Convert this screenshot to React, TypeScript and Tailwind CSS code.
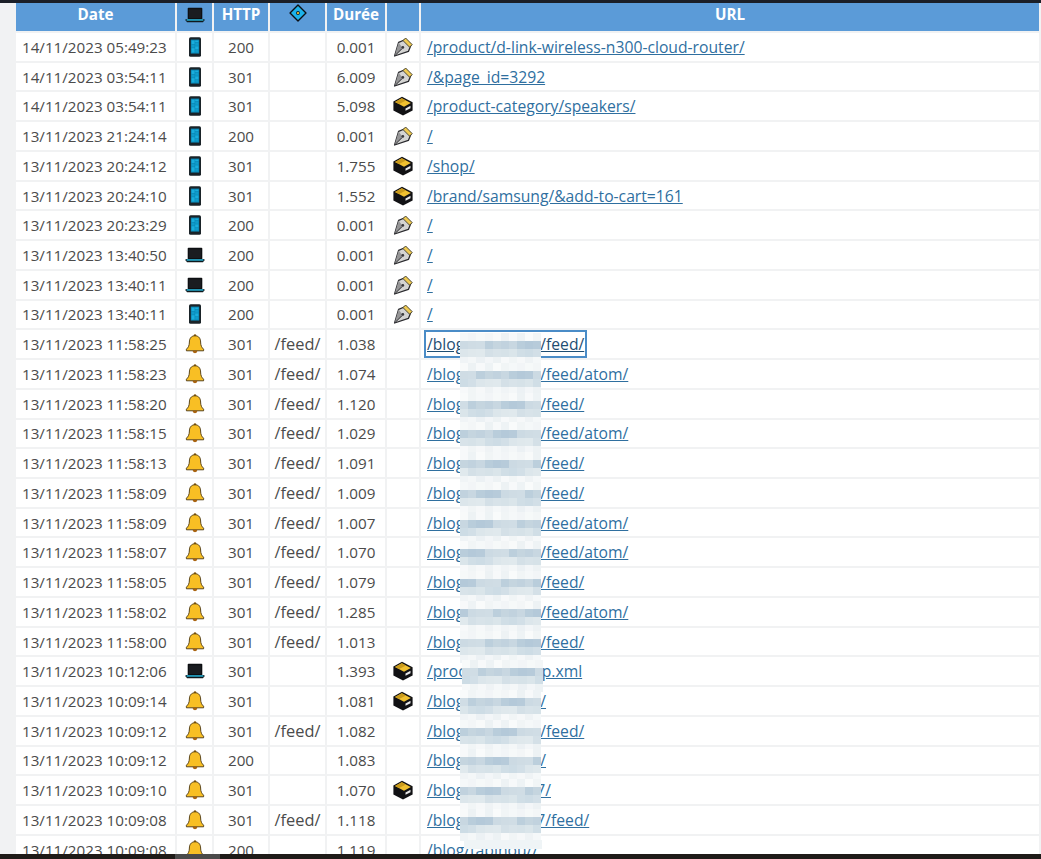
const Laptop = () => (
  <svg viewBox="0 0 20 20" className="mx-auto block h-5 w-5">
    <path d="M3.5 2.8h13a.8.8 0 0 1 .8.8V14H2.7V3.6a.8.8 0 0 1 .8-.8z" fill="#0d0f12" />
    <rect x="4" y="4.2" width="12" height="8.8" fill="#1a1c20" />
    <path d="M.6 14h18.8v1.2L18 17.2H2L.6 15.2z" fill="#10181c" />
    <rect x="1.6" y="14.2" width="16.8" height="1.5" fill="#27b2d8" />
  </svg>
);

const Phone = () => (
  <svg viewBox="0 0 20 20" className="mx-auto block h-5 w-5">
    <rect x="4" y="0.2" width="12" height="19.6" rx="1.6" fill="#1a2328" />
    <rect x="5.8" y="2.6" width="8.4" height="14" fill="#0a86b4" />
    <rect x="6.6" y="3.6" width="3" height="3.4" fill="#19aedd" />
    <rect x="10.2" y="3.6" width="3.2" height="1.6" fill="#19aedd" />
    <rect x="10.2" y="5.8" width="3.2" height="3" fill="#0f9ccb" />
    <rect x="6.6" y="7.6" width="3" height="3" fill="#0f9ccb" />
    <rect x="10.2" y="9.4" width="3.2" height="3" fill="#19aedd" />
    <rect x="6.6" y="11.2" width="3" height="4.4" fill="#19aedd" />
    <rect x="10.2" y="13" width="3.2" height="2.6" fill="#0f9ccb" />
  </svg>
);

const Nib = () => (
  <svg viewBox="0 0 20 20" className="mx-auto block h-5 w-5">
    <path d="M12.5 2.5 18 8l-2.6 6.4L1.6 19 5.6 5.4z" fill="#d4d4d2" stroke="#2a2a2e" strokeWidth="1.3" strokeLinejoin="round" />
    <path d="M5.6 5.4 1.6 19l8.4-7.6z" fill="#959596" />
    <path d="M12.6 1 19.2 7.6 16.6 10.2 10 3.6z" fill="#f0cb52" stroke="#3a3a30" strokeWidth="0.9" strokeLinejoin="round" />
    <path d="M1.6 19l7-7" stroke="#2a2a2e" strokeWidth="0.9" />
    <circle cx="9.8" cy="10.4" r="1.4" fill="#3a3a3d" />
  </svg>
);

const Box = () => (
  <svg viewBox="0 0 20 20" className="mx-auto block h-5 w-5">
    <path d="M9 .8 19.6 6.2v8.4L10 19.6.4 14.6V5.6z" fill="#111114" strokeLinejoin="round" />
    <path d="M8.8 2.2 17.8 7 11 10.8 2 6z" fill="#f0c030" />
    <path d="M8.8 2.2 13 4.5 6 8.1 2 6z" fill="#c99a1c" />
    <path d="m12.5 12.4 5-2.6v2.4l-5 2.6z" fill="#e8e8e8" />
  </svg>
);

const Bell = () => (
  <svg viewBox="0 0 20 20" className="mx-auto block h-5 w-5">
    <circle cx="10" cy="1.6" r="1.3" fill="#8a5c10" />
    <path d="M10 1.8C5.8 1.8 4.4 5 4.4 8c0 3.6-1.2 5.6-3 7.2v1.6h17.2v-1.6c-1.8-1.6-3-3.6-3-7.2 0-3-1.4-6.2-5.6-6.2z" fill="#f8bf24" stroke="#4a3510" strokeWidth="0.9" strokeLinejoin="round" />
    <path d="M7.6 16.8a2.4 2.4 0 0 0 4.8 0z" fill="#a8620e" />
  </svg>
);

const Diamond = () => (
  <svg viewBox="0 0 16 16" className="h-[18px] w-[18px]">
    <path d="M8 .9 15.1 8 8 15.1.9 8z" fill="#1cb2ea" stroke="#0b0f14" strokeWidth="1.2" strokeLinejoin="round" />
    <circle cx="8" cy="8" r="1.7" fill="#10202a" />
    <circle cx="8" cy="8" r="1" fill="#f2c230" />
  </svg>
);

const shades = [
  ['#f5f8f9', '#eef3f5', '#f8fafa', '#f2f5f7', '#f9fbfb', '#edf2f4', '#f6f9f9', '#f1f5f6', '#f7f9fa', '#f3f6f7'],
  ['#ccdae3', '#b9cddb', '#c5d5df', '#cfdce4', '#b4c9d9', '#c1d2de', '#d0dde5', '#b7cbda', '#c8d7e1', '#bccfdc'],
  ['#dce6eb', '#d0dee6', '#d8e3e9', '#dfe8ec', '#cddce5', '#d6e2e8', '#e0e9ed', '#d2dfe7', '#dae5ea', '#d4e0e7'],
  ['#f0f4f6', '#f6f8f9', '#edf2f4', '#f4f7f8', '#eff3f5', '#f7f9fa', '#ecf1f4', '#f5f8f9', '#f1f5f6', '#f3f6f8'],
];

// mosaic hiding part of the url
const Mask = ({ seed, narrow }: { seed: number; narrow?: boolean }) => (
  <span className={narrow ? 'relative inline-block h-px w-[72px]' : 'relative inline-block h-px w-[76px]'}>
    <span className="absolute -top-[16px] -left-[4px] z-10 grid h-[32px] w-[81px] grid-cols-10 grid-rows-4 blur-[0.4px]">
      {shades.flatMap((row, r) =>
        row.map((_, c) => (
          <span key={`${r}-${c}`} style={{ backgroundColor: row[(c * 3 + seed * (r + 2)) % 10] }} />
        )),
      )}
    </span>
  </span>
);

type Row = {
  date: string;
  agent: 'phone' | 'laptop' | 'bell';
  http: number;
  feed?: boolean;
  time: string;
  kind?: 'nib' | 'box';
  url?: string;
  pre?: string;
  post?: string;
  narrow?: boolean;
  focus?: boolean;
  faint?: boolean;
};

const rows: Row[] = [
  { date: '14/11/2023 05:49:23', agent: 'phone', http: 200, time: '0.001', kind: 'nib', url: '/product/d-link-wireless-n300-cloud-router/' },
  { date: '14/11/2023 03:54:11', agent: 'phone', http: 301, time: '6.009', kind: 'nib', url: '/&page_id=3292' },
  { date: '14/11/2023 03:54:11', agent: 'phone', http: 301, time: '5.098', kind: 'box', url: '/product-category/speakers/' },
  { date: '13/11/2023 21:24:14', agent: 'phone', http: 200, time: '0.001', kind: 'nib', url: '/' },
  { date: '13/11/2023 20:24:12', agent: 'phone', http: 301, time: '1.755', kind: 'box', url: '/shop/' },
  { date: '13/11/2023 20:24:10', agent: 'phone', http: 301, time: '1.552', kind: 'box', url: '/brand/samsung/&add-to-cart=161' },
  { date: '13/11/2023 20:23:29', agent: 'phone', http: 200, time: '0.001', kind: 'nib', url: '/' },
  { date: '13/11/2023 13:40:50', agent: 'laptop', http: 200, time: '0.001', kind: 'nib', url: '/' },
  { date: '13/11/2023 13:40:11', agent: 'laptop', http: 200, time: '0.001', kind: 'nib', url: '/' },
  { date: '13/11/2023 13:40:11', agent: 'phone', http: 200, time: '0.001', kind: 'nib', url: '/' },
  { date: '13/11/2023 11:58:25', agent: 'bell', http: 301, feed: true, time: '1.038', pre: '/blog', post: '/feed/', focus: true },
  { date: '13/11/2023 11:58:23', agent: 'bell', http: 301, feed: true, time: '1.074', pre: '/blog', post: '/feed/atom/' },
  { date: '13/11/2023 11:58:20', agent: 'bell', http: 301, feed: true, time: '1.120', pre: '/blog', post: '/feed/' },
  { date: '13/11/2023 11:58:15', agent: 'bell', http: 301, feed: true, time: '1.029', pre: '/blog', post: '/feed/atom/' },
  { date: '13/11/2023 11:58:13', agent: 'bell', http: 301, feed: true, time: '1.091', pre: '/blog', post: '/feed/' },
  { date: '13/11/2023 11:58:09', agent: 'bell', http: 301, feed: true, time: '1.009', pre: '/blog', post: '/feed/' },
  { date: '13/11/2023 11:58:09', agent: 'bell', http: 301, feed: true, time: '1.007', pre: '/blog', post: '/feed/atom/' },
  { date: '13/11/2023 11:58:07', agent: 'bell', http: 301, feed: true, time: '1.070', pre: '/blog', post: '/feed/atom/' },
  { date: '13/11/2023 11:58:05', agent: 'bell', http: 301, feed: true, time: '1.079', pre: '/blog', post: '/feed/' },
  { date: '13/11/2023 11:58:02', agent: 'bell', http: 301, feed: true, time: '1.285', pre: '/blog', post: '/feed/atom/' },
  { date: '13/11/2023 11:58:00', agent: 'bell', http: 301, feed: true, time: '1.013', pre: '/blog', post: '/feed/' },
  { date: '13/11/2023 10:12:06', agent: 'laptop', http: 301, time: '1.393', kind: 'box', pre: '/proc', post: 'p.xml' },
  { date: '13/11/2023 10:09:14', agent: 'bell', http: 301, time: '1.081', kind: 'box', pre: '/blog', post: '/' },
  { date: '13/11/2023 10:09:12', agent: 'bell', http: 301, feed: true, time: '1.082', pre: '/blog', post: '/feed/' },
  { date: '13/11/2023 10:09:12', agent: 'bell', http: 200, time: '1.083', pre: '/blog', post: '/' },
  { date: '13/11/2023 10:09:10', agent: 'bell', http: 301, time: '1.070', kind: 'box', pre: '/blog', post: '7/', narrow: true },
  { date: '13/11/2023 10:09:08', agent: 'bell', http: 301, feed: true, time: '1.118', pre: '/blog', post: '7/feed/', narrow: true },
  { date: '13/11/2023 10:09:08', agent: 'bell', http: 200, time: '1.119', pre: '/blog', post: '/tapinou//', faint: true },
];

const agents = { phone: <Phone />, laptop: <Laptop />, bell: <Bell /> };
const kinds = { nib: <Nib />, box: <Box /> };

export default function App() {
  return (
    <div className="flex h-[859px] w-[1041px] flex-col overflow-hidden bg-[#f1f2f3] font-['Open_Sans','Noto_Sans',sans-serif] text-[15.2px] leading-[20px] text-[#4b4b4b]">
      <div className="z-20 h-[3px] shrink-0 bg-[#1b1f27]" />
      <div className="min-h-0 flex-1 overflow-hidden pl-[14px]">
        <table className="-mt-[2px] w-[1027px] table-fixed border-separate border-spacing-[2px]">
          <colgroup>
            <col className="w-[159px]" />
            <col className="w-[35px]" />
            <col className="w-[54px]" />
            <col className="w-[55px]" />
            <col className="w-[58px]" />
            <col className="w-[32px]" />
            <col />
          </colgroup>
          <thead>
            <tr className="bg-[#5b9bd8] align-top font-bold text-white">
              <th className="h-[28px] pt-px">Date</th>
              <th className="pt-[2px]"><Laptop /></th>
              <th className="pt-px">HTTP</th>
              <th className="pt-[1px]"><div className="flex justify-center"><Diamond /></div></th>
              <th className="pt-px">Durée</th>
              <th />
              <th className="pt-px">URL</th>
            </tr>
          </thead>
          <tbody>
            {rows.map((row, i) => (
              <tr key={i} className="bg-white">
                <td className="h-[27.74px] whitespace-nowrap pl-[6px]">{row.date}</td>
                <td>{agents[row.agent]}</td>
                <td className="text-center">{row.http}</td>
                <td className="text-center text-[16.4px]">{row.feed ? '/feed/' : ''}</td>
                <td className="text-center">{row.time}</td>
                <td>{row.kind ? kinds[row.kind] : null}</td>
                <td className="whitespace-nowrap pl-[6px] text-[15.7px]">
                  <a
                    href="#"
                    className={
                      row.focus
                        ? 'text-[#1d4d72] underline outline-2 outline-offset-1 outline-[#4a8cc7]'
                        : 'text-[#2f6f9f] underline'
                    }
                  >
                    {row.url ?? row.pre}
                    {row.faint ? (
                      <span className="relative inline-block h-px w-0">
                        <span className="absolute -top-[15px] left-[0px] z-10 h-[9px] w-[78px] bg-[#eff4f6]" />
                      </span>
                    ) : null}
                    {row.post && !row.faint ? <Mask seed={i} narrow={row.narrow} /> : null}
                    {row.post}
                  </a>
                </td>
              </tr>
            ))}
          </tbody>
        </table>
      </div>
      <div className="z-20 flex h-[5px] shrink-0 bg-[#1f1b18]">
        <div className="ml-[175px] w-[45px] bg-[#4a4a4a]" />
      </div>
    </div>
  );
}
